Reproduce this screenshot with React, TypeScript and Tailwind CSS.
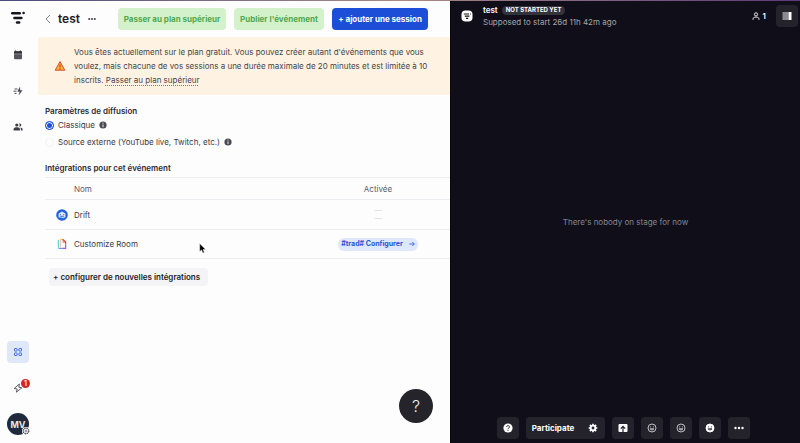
import type { ReactNode } from "react";

function Logo() {
  return (
    <svg viewBox="0 0 16 14" className="h-3.5 w-4" fill="#15141f" aria-hidden="true">
      <rect x="1" y="1" width="10" height="2.6" rx="1.3" />
      <circle cx="13.6" cy="2" r="1.3" />
      <rect x="3.2" y="5.8" width="9.4" height="2.4" rx="1.2" />
      <rect x="5.8" y="10.2" width="4.6" height="2.6" rx="1.3" />
    </svg>
  );
}

function CalendarIcon() {
  return (
    <svg viewBox="0 0 10 10" className="size-2.5" aria-hidden="true">
      <rect x="1" y="1.2" width="8" height="8" rx="1" fill="#55545c" />
      <path d="M1 2.2a1 1 0 0 1 1-1h6a1 1 0 0 1 1 1v1.3H1z" fill="#33323a" />
      <path d="M2.6.4v1.4M7.4.4v1.4" stroke="#33323a" />
      <path d="M1 4h8" stroke="#a5a4aa" strokeWidth=".6" />
    </svg>
  );
}

function FlowIcon() {
  return (
    <svg viewBox="0 0 10 10" className="size-2.5" fill="none" stroke="#3f3e47" aria-hidden="true">
      <path d="M1.5 3h3M.5 5.2h3M1.5 7.4h2" strokeWidth=".9" />
      <path d="M6.8 1.2 4.6 5.4h2.2L6 8.8l3.2-4.4H7z" fill="#3f3e47" strokeWidth=".3" />
    </svg>
  );
}

function PeopleIcon() {
  return (
    <svg viewBox="0 0 10 10" className="size-2.5" fill="#3f3e47" aria-hidden="true">
      <circle cx="3.8" cy="3" r="1.6" />
      <path d="M.6 8.4V7.3c0-1.5 1.6-2 3.2-2s3.2.5 3.2 2v1.1z" />
      <path d="M6.1 1.5a1.6 1.6 0 1 1 0 3 2.3 2.3 0 0 0 0-3zM7.2 5.5c1.4.2 2.4.8 2.4 1.8v1.1H7.9V7.3c0-.8-.3-1.4-.7-1.8z" />
    </svg>
  );
}

function GridIcon() {
  return (
    <svg viewBox="0 0 10 10" className="size-2.5" fill="none" stroke="#3f6be0" aria-hidden="true">
      <rect x="1.5" y="1.5" width="2.6" height="2.6" rx=".5" />
      <rect x="5.9" y="1.5" width="2.6" height="2.6" rx=".5" />
      <rect x="1.5" y="5.9" width="2.6" height="2.6" rx=".5" />
      <rect x="5.9" y="5.9" width="2.6" height="2.6" rx=".5" />
    </svg>
  );
}

function BoltIcon() {
  return (
    <svg viewBox="0 0 10 10" className="size-2.5" fill="none" stroke="#4a4952" strokeWidth=".9" strokeLinejoin="round" aria-hidden="true">
      <path d="M6.4 1 1.2 5.4l3 .6-.8 3.2L8.8 4.8l-3-.6z" />
    </svg>
  );
}

function GearIcon({ className }: { className: string }) {
  return (
    <svg viewBox="0 0 12 12" className={className} aria-hidden="true">
      <path d="M6 .8v10.4M.8 6h10.4M2.3 2.3l7.4 7.4M9.7 2.3 2.3 9.7" stroke="currentColor" strokeWidth="2" />
      <circle cx="6" cy="6" r="2.9" fill="none" stroke="currentColor" strokeWidth="2.2" />
      <circle cx="6" cy="6" r="1.7" fill="#26252e" />
    </svg>
  );
}

function WarningIcon() {
  return (
    <svg viewBox="0 0 12 12" className="size-3 shrink-0" aria-hidden="true">
      <path d="M6 1.6 10.8 10.2H1.200z" fill="#f5b93b" stroke="#d9482b" strokeLinejoin="round" />
      <path d="M6 4.400v3M6 8.200v1.200" stroke="#c2301d" strokeWidth="1.100" />
    </svg>
  );
}

function InfoIcon() {
  return (
    <svg viewBox="0 0 8 8" className="size-2 shrink-0" aria-hidden="true">
      <circle cx="4" cy="4" r="3.6" fill="#4b4a52" />
      <path d="M4 1.6v1M4 3.4v2.8" stroke="#fff" strokeWidth=".9" />
    </svg>
  );
}

function DriftIcon() {
  return (
    <svg viewBox="0 0 12 12" className="size-3" aria-hidden="true">
      <circle cx="6" cy="6" r="5.8" fill="#1f62e0" />
      <path d="M2.600 4.400 6 2.400l3.400 2v4.200H7.400v1L5.400 8.600H2.600z" fill="#dbe8ff" />
      <path d="M4.400 5.200v1M7.600 5.200v1M4.200 7.300h3.600" stroke="#1f62e0" strokeWidth=".9" />
    </svg>
  );
}

function RoomIcon() {
  return (
    <svg viewBox="0 0 12 12" className="size-3" fill="none" aria-hidden="true">
      <path d="M2.4 1.8v8" stroke="#62d6c4" strokeWidth="1.2" />
      <path d="M2.4 10.4h4" stroke="#5aa2f0" strokeWidth="1.2" />
      <path d="M4.2 1.4h3" stroke="#f4c04e" strokeWidth="1.2" />
      <path d="M7 1.4 9.6 4v2.6" stroke="#e2433c" strokeWidth="1.2" />
      <path d="M9.6 6.4v4H6.2" stroke="#a55ae0" strokeWidth="1.2" />
      <path d="M4.4 2v7.6" stroke="#f4a9a0" strokeWidth=".8" />
      <path d="M7 1.6v2.6h2.6" stroke="#e2433c" strokeWidth=".8" />
    </svg>
  );
}

function PersonIcon() {
  return (
    <svg viewBox="0 0 8 8" className="size-2" fill="none" stroke="#e6e6ea" aria-hidden="true">
      <circle cx="4" cy="2.4" r="1.6" />
      <path d="M1 7.8V7c0-1.3 1.2-1.9 3-1.9S7 5.7 7 7v.8" />
    </svg>
  );
}

function SmileyIcon({ filled = false }: { filled?: boolean }) {
  return (
    <svg viewBox="0 0 10 10" className="size-2.5" fill="none" aria-hidden="true">
      <circle cx="5" cy="5" r="4" fill={filled ? "#fff" : "none"} stroke={filled ? "#fff" : "#cfcfd4"} strokeWidth=".9" />
      <path
        d="M3.1 3.9h1M5.9 3.9h1M3 5.8c.8 1.5 3.2 1.5 4 0z"
        stroke={filled ? "#26252e" : "#cfcfd4"}
        strokeWidth=".9"
      />
    </svg>
  );
}

function DotsIcon({ className }: { className: string }) {
  return (
    <svg viewBox="0 0 10 10" className={className} fill="currentColor" aria-hidden="true">
      <circle cx="1.5" cy="5" r="1.2" />
      <circle cx="5" cy="5" r="1.2" />
      <circle cx="8.5" cy="5" r="1.2" />
    </svg>
  );
}

function NavButton({ label, children }: { label: string; children: ReactNode }) {
  return (
    <button type="button" aria-label={label} className="flex size-[22px] items-center justify-center rounded">
      {children}
    </button>
  );
}

function StageButton({ label, children }: { label: string; children: ReactNode }) {
  return (
    <button type="button" aria-label={label} className="flex size-[22px] items-center justify-center rounded bg-[#24232c]">
      {children}
    </button>
  );
}

function Sidebar() {
  return (
    <nav className="flex w-9 shrink-0 flex-col items-center justify-between pt-2.5 pb-2">
      <div className="flex flex-col items-center">
        <Logo />
        <div className="mt-[19px] flex flex-col gap-3.5">
          <NavButton label="Calendrier"><CalendarIcon /></NavButton>
          <NavButton label="Automatisations"><FlowIcon /></NavButton>
          <NavButton label="Participants"><PeopleIcon /></NavButton>
        </div>
      </div>
      <div className="flex flex-col items-center gap-3.5">
        <button type="button" aria-label="Applications" className="flex size-[22px] items-center justify-center rounded bg-[#dfe8fb]">
          <GridIcon />
        </button>
        <button type="button" aria-label="Nouveautés" className="relative flex size-[22px] items-center justify-center">
          <BoltIcon />
          <span className="absolute top-0.5 -right-px flex size-[9px] items-center justify-center rounded-full bg-[#d6232b] text-[7px] leading-none font-semibold text-white">
            1
          </span>
        </button>
        <button type="button" className="relative flex size-[22px] items-center justify-center rounded-full bg-[#1f2a3c] text-[9px] leading-none font-bold text-[#e4e7ec]">
          MV
          <span className="absolute -right-px bottom-0 flex size-2 items-center justify-center rounded-full bg-white text-[#4a4952]">
            <svg viewBox="0 0 12 12" className="size-2" fill="none" stroke="currentColor" aria-hidden="true">
              <circle cx="6" cy="6" r="4.2" strokeWidth="1.8" strokeDasharray="2.300 1" />
              <circle cx="6" cy="6" r="1.500" />
            </svg>
          </span>
        </button>
      </div>
    </nav>
  );
}

function Header() {
  return (
    <header className="flex h-9 items-center pl-2">
      <button type="button" aria-label="Retour" className="flex w-2 justify-center">
        <svg viewBox="0 0 6 10" className="h-2.5 w-1.5" fill="none" stroke="#77767e" strokeWidth=".9" aria-hidden="true">
          <path d="M5 1 1 5l4 4" />
        </svg>
      </button>
      <h1 className="ml-1.5 text-[12px] leading-4 font-semibold text-[#1d1c25]">test</h1>
      <button type="button" aria-label="Plus d'options" className="ml-2 text-[#33323a]">
        <DotsIcon className="size-2" />
      </button>
      <div className="ml-[22px] flex gap-2 text-[8px] font-bold">
        <button type="button" className="h-[22px] w-[108px] rounded bg-[#d3f1cb] text-[#52a84f]">Passer au plan supérieur</button>
        <button type="button" className="h-[22px] w-[90px] rounded bg-[#d3f1cb] text-[#52a84f]">Publier l'événement</button>
        <button type="button" className="h-[22px] w-24 rounded bg-[#1d4ed8] text-white">+ ajouter une session</button>
      </div>
    </header>
  );
}

function BroadcastSettings() {
  return (
    <fieldset className="mt-2.5 pl-[9px]">
      <legend className="leading-3 font-semibold text-[#2b2a33]">Paramètres de diffusion</legend>
      <div className="mt-0.5 flex flex-col gap-[5px]">
        <label className="flex h-3 items-center gap-1">
          <input
            type="radio"
            name="source"
            defaultChecked
            className="size-[9px] appearance-none rounded-full border border-[#1d4ed8] bg-white checked:bg-[#1d4ed8] checked:shadow-[inset_0_0_0_1px_#fff]"
          />
          Classique
          <InfoIcon />
        </label>
        <label className="flex h-3 items-center gap-1">
          <input type="radio" name="source" className="size-[9px] appearance-none rounded-full border border-[#f3f3f6]" />
          Source externe (YouTube live, Twitch, etc.)
          <InfoIcon />
        </label>
      </div>
    </fieldset>
  );
}

function Integrations() {
  return (
    <section className="mt-3.5 pl-[9px]">
      <h2 className="leading-3 font-semibold text-[#2b2a33]">Intégrations pour cet événement</h2>
      <table className="mt-[3px] w-full table-fixed text-left">
        <thead>
          <tr className="h-[22px] border-y border-[#ededf1] text-[#5c5b64]">
            <th className="w-[29px]" aria-label="Icône" />
            <th className="font-normal">Nom</th>
            <th className="w-[144px] text-center font-normal">Activée</th>
          </tr>
        </thead>
        <tbody>
          <tr className="h-[30px] border-b border-[#ededf1]">
            <td className="pl-[11px]"><DriftIcon /></td>
            <td>Drift</td>
            <td>
              <input type="checkbox" aria-label="Activer Drift" className="mx-auto block size-[9px] appearance-none rounded-xs border-y border-[#e2e2e7]" />
            </td>
          </tr>
          <tr className="h-[29px] border-b border-[#ededf1]">
            <td className="pl-[11px]"><RoomIcon /></td>
            <td>Customize Room</td>
            <td>
              <button type="button" className="mx-auto flex h-[13px] w-20 items-center justify-center gap-1.5 rounded-md bg-[#dfe8fb] text-[7px] font-bold text-[#1f55d6]">
                #trad# Configurer
                <svg viewBox="0 0 6 6" className="size-1.5" fill="none" stroke="currentColor" strokeWidth=".8" aria-hidden="true">
                  <path d="M.3 3h5M3.3 1l2 2-2 2" />
                </svg>
              </button>
            </td>
          </tr>
        </tbody>
      </table>
      <button type="button" className="mt-[9px] ml-1 h-[18px] rounded bg-[#f4f4f6] pr-2 pl-1 font-semibold text-[#1d1c25]">
        + configurer de nouvelles intégrations
      </button>
    </section>
  );
}

function AdminPane() {
  return (
    <div className="relative flex w-9/16 bg-[#fdfdfe] text-[8px] text-[#3a3942]">
      <Sidebar />
      <main className="flex min-w-0 flex-1 flex-col text-[#3a3942]">
        <Header />
        <div className="ml-0.5 flex items-center gap-2 bg-[#fef3e2] py-2 pr-4 pl-4">
          <WarningIcon />
          <p className="leading-[14px] text-[#45434a]">
            Vous êtes actuellement sur le plan gratuit. Vous pouvez créer autant d'événements que vous voulez, mais chacune
            de vos sessions a une durée maximale de 20 minutes et est limitée à 10 inscrits.{" "}
            <a href="#plan" className="underline decoration-[#77767e] decoration-dotted underline-offset-2">Passer au plan supérieur</a>
          </p>
        </div>
        <BroadcastSettings />
        <Integrations />
      </main>
      <button type="button" className="absolute right-[17px] bottom-5 flex size-[34px] items-center justify-center rounded-full bg-[#25242b] text-[16px] leading-none font-light text-[#eeeef0]">
        ?
      </button>
      <svg viewBox="0 0 8 11" className="pointer-events-none absolute top-[242px] left-[199px] h-[11px] w-2" aria-hidden="true">
        <path d="M.7.5v8l1.9-1.6 1.3 3.2 1.4-.6L4 6.5h2.6z" fill="#000" stroke="#fff" strokeWidth=".4" />
      </svg>
    </div>
  );
}

function StagePane() {
  return (
    <div className="ml-px flex min-w-0 flex-1 flex-col bg-[#100f19] text-[8px] text-white">
      <header className="flex h-[30px] items-center pr-0.5 pl-2.5">
        <svg viewBox="0 0 12 12" className="size-3 shrink-0" aria-hidden="true">
          <rect x=".5" y=".5" width="11" height="11" rx="4" fill="#fff" />
          <path d="M2.8 4h5.2M9 4h.8M3.8 6.2h4.6M5 8.4h2.2" stroke="#100f19" strokeWidth="1.2" />
        </svg>
        <div className="ml-2.5 flex-1">
          <div className="flex h-3 items-center gap-1">
            <strong className="font-semibold">test</strong>
            <span className="flex h-[9px] items-center rounded-full bg-[#34333c] px-1 text-[6px] leading-none font-bold">NOT STARTED YET</span>
          </div>
          <p className="leading-3 text-[#a5a4ac]">Supposed to start 26d 11h 42m ago</p>
        </div>
        <span className="flex items-center gap-[3px] font-semibold"><PersonIcon />1</span>
        <button type="button" aria-label="Panneau latéral" className="ml-2.5 flex size-[22px] items-center justify-center rounded bg-[#24232c]">
          <svg viewBox="0 0 10 8" className="h-2 w-2.5" aria-hidden="true">
            <rect x=".5" width="6" height="8" fill="#8b8a92" />
            <rect x="6.5" width="3" height="8" fill="#fff" />
          </svg>
        </button>
      </header>
      <p className="flex flex-1 items-center justify-center pb-1 text-[#85848c]">There's nobody on stage for now</p>
      <footer className="flex justify-center gap-[7px] pr-1 pb-1">
        <StageButton label="Aide">
          <svg viewBox="0 0 10 10" className="size-2.5" fill="none" aria-hidden="true">
            <circle cx="5" cy="5" r="4.6" fill="#fff" />
            <path d="M3.6 4c0-2 2.9-1.8 2.9 0 0 1-1.5 1-1.5 2.1M5 6.9v1" stroke="#24232c" />
          </svg>
        </StageButton>
        <div className="flex h-[22px] rounded bg-[#24232c]">
          <button type="button" className="pl-1.5 font-bold">Participate</button>
          <button type="button" aria-label="Réglages" className="flex items-center pr-[7px] pl-3.5">
            <GearIcon className="size-2.5" />
          </button>
        </div>
        <StageButton label="Partager">
          <svg viewBox="0 0 10 10" className="size-2.5" aria-hidden="true">
            <rect x=".5" y="1" width="9" height="8" rx="1" fill="#fff" />
            <path d="M5 9V4M2.8 5.6 5 3.4l2.2 2.2" fill="none" stroke="#24232c" strokeWidth="1.2" />
          </svg>
        </StageButton>
        <StageButton label="Réactions"><SmileyIcon /></StageButton>
        <StageButton label="Émojis"><SmileyIcon /></StageButton>
        <StageButton label="Avatar"><SmileyIcon filled /></StageButton>
        <StageButton label="Plus"><DotsIcon className="size-2.5" /></StageButton>
      </footer>
    </div>
  );
}

export default function App() {
  return (
    <div className="flex min-h-screen flex-col bg-[#08080f] font-['Inter','Liberation_Sans',sans-serif]">
      <div className="h-px bg-linear-to-r from-[#4b4a7c] via-[#a98a84] to-[#5a3a78]" />
      <div className="flex flex-1">
        <AdminPane />
        <StagePane />
      </div>
    </div>
  );
}
